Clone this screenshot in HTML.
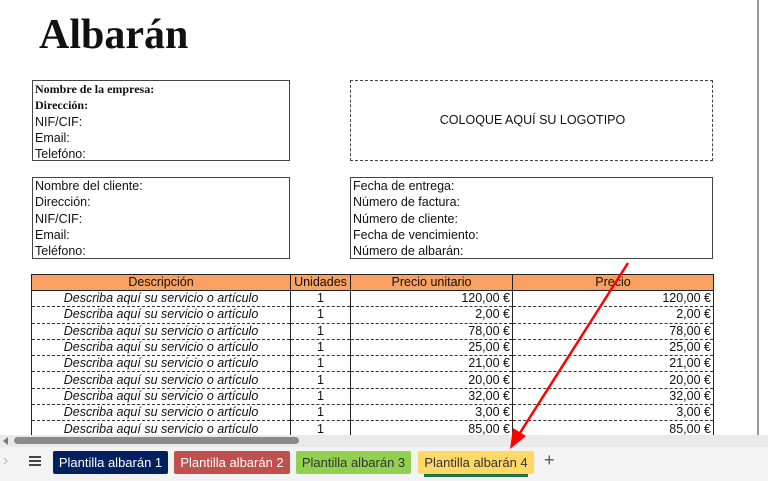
<!DOCTYPE html><html><head><meta charset="utf-8"><style>
body{margin:0;width:768px;height:481px;overflow:hidden;background:#fff;position:relative;font-family:"Liberation Sans",sans-serif;color:#111}
.a{position:absolute}
h1{position:absolute;left:39px;top:11px;margin:0;font:bold 42px "Liberation Serif",serif}
.box{position:absolute;border:1px solid #444;box-sizing:border-box;font-size:12.5px;line-height:16.3px;padding-left:2px}
.serif{font-family:"Liberation Serif",serif;font-weight:bold;font-size:12px}
table{position:absolute;left:31px;top:274px;border-collapse:collapse;font-size:12.5px}
td{height:15.3px;padding:0 2px;line-height:15px;border-bottom:1px dashed #333;border-left:1px solid #222;border-right:1px solid #222}
th{background:#f9a062;font-weight:normal;height:15px;border:1px solid #222;padding:0;line-height:15px}
td.d{font-style:italic;text-align:center;padding-left:2px;padding-right:2px}
td.r{text-align:right}
.tab{position:absolute;top:451px;height:23px;line-height:23px;font-size:13px;text-align:center;border-radius:2px}
</style></head><body>
<h1>Albarán</h1>
<div class="a" style="left:757px;top:0;width:2px;height:435px;background:#999"></div>
<div class="box" style="left:32px;top:80px;width:258px;height:81px"><div class="serif">Nombre de la empresa:</div><div class="serif">Dirección:</div>NIF/CIF:<br>Email:<br>Telefóno:</div>
<div class="box" style="left:350px;top:80px;width:363px;height:81px;border:1px dashed #444;text-align:center;line-height:79px">COLOQUE AQUÍ SU LOGOTIPO</div>
<div class="box" style="left:32px;top:177px;width:258px;height:82px">Nombre del cliente:<br>Dirección:<br>NIF/CIF:<br>Email:<br>Teléfono:</div>
<div class="box" style="left:350px;top:177px;width:363px;height:82px">Fecha de entrega:<br>Número de factura:<br>Número de cliente:<br>Fecha de vencimiento:<br>Número de albarán:</div>
<table>
<tr><th style="width:258px">Descripción</th><th style="width:59px">Unidades</th><th style="width:161px">Precio unitario</th><th style="width:200px">Precio</th></tr>
<tr><td class="d">Describa aquí su servicio o artículo</td><td style="text-align:center">1</td><td class="r">120,00 €</td><td class="r">120,00 €</td></tr>
<tr><td class="d">Describa aquí su servicio o artículo</td><td style="text-align:center">1</td><td class="r">2,00 €</td><td class="r">2,00 €</td></tr>
<tr><td class="d">Describa aquí su servicio o artículo</td><td style="text-align:center">1</td><td class="r">78,00 €</td><td class="r">78,00 €</td></tr>
<tr><td class="d">Describa aquí su servicio o artículo</td><td style="text-align:center">1</td><td class="r">25,00 €</td><td class="r">25,00 €</td></tr>
<tr><td class="d">Describa aquí su servicio o artículo</td><td style="text-align:center">1</td><td class="r">21,00 €</td><td class="r">21,00 €</td></tr>
<tr><td class="d">Describa aquí su servicio o artículo</td><td style="text-align:center">1</td><td class="r">20,00 €</td><td class="r">20,00 €</td></tr>
<tr><td class="d">Describa aquí su servicio o artículo</td><td style="text-align:center">1</td><td class="r">32,00 €</td><td class="r">32,00 €</td></tr>
<tr><td class="d">Describa aquí su servicio o artículo</td><td style="text-align:center">1</td><td class="r">3,00 €</td><td class="r">3,00 €</td></tr>
<tr><td class="d">Describa aquí su servicio o artículo</td><td style="text-align:center">1</td><td class="r">85,00 €</td><td class="r">85,00 €</td></tr>
<tr><td class="d">&nbsp;</td><td></td><td></td><td></td></tr>
</table>
<div class="a" style="left:0;top:435px;width:768px;height:12px;background:#e9e9e9"></div>
<div class="a" style="left:3px;top:437px;width:0;height:0;border:4px solid transparent;border-right:5px solid #777;border-left:0"></div>
<div class="a" style="left:14px;top:437px;width:285px;height:7px;border-radius:4px;background:#8a8a8a"></div>
<div class="a" style="left:0;top:447px;width:768px;height:34px;background:#f3f3f3"></div>
<div class="a" style="left:3px;top:452px;color:#bbb;font-size:16px">›</div>
<div class="a" style="left:29px;top:456px;width:12px;height:2px;background:#444;box-shadow:0 4px 0 #444,0 8px 0 #444"></div>
<div class="tab" style="left:53px;width:115px;background:#002060;color:#fff">Plantilla albarán 1</div>
<div class="tab" style="left:174px;width:116px;background:#c0504d;color:#fff">Plantilla albarán 2</div>
<div class="tab" style="left:296px;width:115px;background:#92d050;color:#333">Plantilla albarán 3</div>
<div class="tab" style="left:418px;width:116px;background:#ffd966;color:#333">Plantilla albarán 4</div>
<div class="a" style="left:424px;top:474px;width:104px;height:3px;background:#217346"></div>
<div class="a" style="left:544px;top:450px;font-size:18px;color:#555">+</div>
<svg class="a" style="left:0;top:0" width="768" height="481"><line x1="628" y1="263" x2="518" y2="436" stroke="#f00" stroke-width="2.5"/><polygon points="510,449 513,428 526,436" fill="#f00"/></svg>
</body></html>
